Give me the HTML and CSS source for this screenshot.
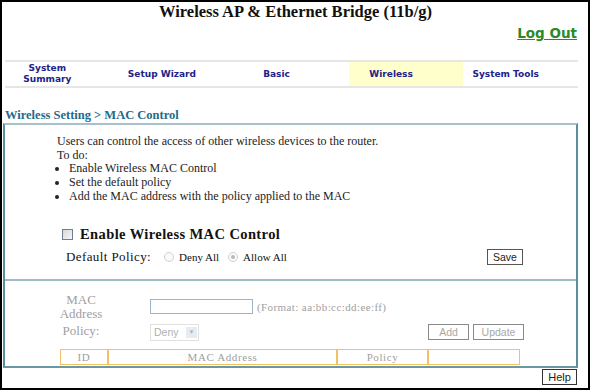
FILE: index.html
```html
<!DOCTYPE html>
<html>
<head>
	<title>MAC Control</title>
	<meta charset="utf-8">
	<link rel="stylesheet" href="styles.css">
</head>
<body>
	<div class="frame">
		<div class="header">
			<h1 class="title">Wireless AP &amp; Ethernet Bridge (11b/g)</h1>
			<div class="logout"><a href="#">Log Out</a></div>
		</div>

		<div class="nav">
			<div class="nav-item">System<br>Summary</div>
			<div class="nav-item">Setup Wizard</div>
			<div class="nav-item">Basic</div>
			<div class="nav-item active">Wireless</div>
			<div class="nav-item">System Tools</div>
		</div>

		<div class="crumb">Wireless Setting &gt; MAC Control</div>

		<div class="panel">
			<div class="intro">
				<p>Users can control the access of other wireless devices to the router.</p>
				<p>To do:</p>
				<ul>
					<li>Enable Wireless MAC Control</li>
					<li>Set the default policy</li>
					<li>Add the MAC address with the policy applied to the MAC</li>
				</ul>
			</div>

			<div class="enable">
				<span class="checkbox"></span>
				<span>Enable Wireless MAC Control</span>
			</div>

			<div class="policy-row">
				<span class="policy-label">Default Policy:</span>
				<span class="radio"></span><span class="opt">Deny All</span>
				<span class="radio checked"></span><span class="opt">Allow All</span>
				<button class="btn save">Save</button>
			</div>

			<div class="divider"></div>

			<div class="mac-form">
				<div class="field-label">MAC<br>Address</div>
				<div class="field">
					<span class="text-input"></span>
					<span class="hint">(Format: aa:bb:cc:dd:ee:ff)</span>
				</div>
				<div class="field-label policy">Policy:</div>
				<div class="field">
					<span class="select">Deny<span class="arrow">&#9660;</span></span>
					<span class="actions">
						<button class="btn off add">Add</button>
						<button class="btn off update">Update</button>
					</span>
				</div>
			</div>

			<table class="mac-table">
				<tr>
					<td class="c-id">ID</td>
					<td class="c-mac">MAC Address</td>
					<td class="c-pol">Policy</td>
					<td class="c-end"></td>
				</tr>
			</table>
		</div>

		<div class="footer">
			<button class="btn help">Help</button>
		</div>
	</div>
</body>
</html>
```

FILE: styles.css
```css
body {
	margin: 0;
	background-color: white;
	font-family: 'Liberation Serif', serif;
}

.frame {
	width: 590px;
	height: 390px;
	box-sizing: border-box;
	border: 2px solid black;
	background-color: white;
	padding: 0 10px 0 1px;
	display: flex;
	flex-direction: column;
}

.header {
	height: 58px;
	flex-shrink: 0;
}

.title {
	margin: 0;
	padding-left: 10px;
	text-align: center;
	font-size: 16.5px;
	line-height: 20px;
	font-weight: bold;
	color: #111;
}

.logout {
	text-align: right;
	padding-top: 2px;
	padding-right: 1px;
}

.logout a {
	font-family: 'DejaVu Sans', sans-serif;
	font-size: 13.5px;
	font-weight: bold;
	color: #2a8a2a;
	text-decoration: underline;
}

.nav {
	display: flex;
	flex-shrink: 0;
	margin-left: 2px;
	border-top: 2px solid #e6e6e6;
	border-bottom: 2px solid #e6e6e6;
	height: 24px;
}

.nav-item {
	flex: 1;
	display: flex;
	align-items: center;
	justify-content: center;
	padding-right: 30px;
	text-align: center;
	font-family: 'DejaVu Sans', sans-serif;
	font-size: 9px;
	font-weight: bold;
	line-height: 11px;
	color: #22228a;
}

.nav-item.active {
	background-color: #ffffcc;
}

.crumb {
	margin-top: 20px;
	padding-left: 2px;
	font-size: 12.5px;
	font-weight: bold;
	line-height: 14px;
	height: 14px;
	color: #246a8c;
}

.panel {
	margin-top: 1px;
	border-top: 2px solid #a8c0cc;
	border-left: 2px solid #5d8e9d;
	border-right: 2px solid #5d8e9d;
	border-bottom: 2px solid #6b97a5;
	padding-bottom: 1px;
}

.intro {
	padding: 10px 0 0 52px;
	font-size: 12px;
	line-height: 13.7px;
	color: #222;
}

.intro p {
	margin: 0;
}

.intro ul {
	margin: 0;
	padding-left: 12px;
	list-style: disc;
}

.enable {
	display: flex;
	align-items: center;
	gap: 7px;
	margin-top: 22px;
	padding-left: 57px;
	font-size: 14.5px;
	line-height: 17px;
	font-weight: bold;
	color: #111;
	letter-spacing: 0.4px;
}

.checkbox {
	width: 9px;
	height: 9px;
	border: 1px solid #6f7f8f;
	background: linear-gradient(135deg, #d8d8d8, #f6f6f6);
}

.policy-row {
	display: flex;
	align-items: center;
	margin-top: 5px;
	padding-left: 61px;
	padding-right: 53px;
	height: 18px;
	font-size: 13px;
	color: #111;
}

.policy-label {
	letter-spacing: 0.4px;
	margin-right: 13px;
}

.radio {
	width: 8px;
	height: 8px;
	border: 1px solid #d0d0d0;
	border-radius: 50%;
	margin-right: 5px;
	position: relative;
	background-color: #fafafa;
}

.radio.checked::after {
	content: '';
	position: absolute;
	left: 2px;
	top: 2px;
	width: 4px;
	height: 4px;
	border-radius: 50%;
	background-color: #b8b8b8;
}

.opt {
	font-size: 11px;
	margin-right: 9px;
}

.btn {
	font-family: 'Liberation Sans', sans-serif;
	font-size: 10.5px;
	background-color: white;
	border: 1px solid #555;
	color: #222;
	padding: 0;
	height: 16px;
	line-height: 14px;
	text-align: center;
}

.save {
	margin-left: auto;
	width: 36px;
}

.divider {
	margin-top: 13px;
	border-top: 2px solid #9cbcc6;
}

.mac-form {
	display: grid;
	grid-template-columns: 102px 1fr;
	padding-left: 25px;
	padding-right: 52px;
	margin-top: 12px;
	color: #a0a0a0;
}

.field-label {
	text-align: center;
	font-size: 13px;
	line-height: 14px;
}

.field-label.policy {
	padding-top: 3px;
}

.field {
	display: flex;
	align-items: center;
	padding-left: 18px;
}

.text-input {
	width: 101px;
	height: 13px;
	border: 1px solid #9db3c6;
	margin-right: 4px;
}

.hint {
	font-size: 11px;
	letter-spacing: 0.4px;
}

.select {
	display: flex;
	align-items: center;
	justify-content: space-between;
	width: 44px;
	height: 15px;
	margin-top: 3px;
	border: 1px solid #e0e0e0;
	padding-left: 3px;
	font-family: 'Liberation Sans', sans-serif;
	font-size: 10.5px;
	color: #b0b0b0;
}

.arrow {
	width: 11px;
	height: 11px;
	margin-right: 1px;
	background-color: #e6ecf2;
	font-size: 6px;
	color: #a8b4c4;
	text-align: center;
	line-height: 11px;
}

.actions {
	margin-left: auto;
	margin-top: 3px;
	display: flex;
	gap: 4px;
}

.btn.off {
	color: #a8a8a8;
	border-color: #8a8a8a;
}

.add { width: 41px; }
.update { width: 51px; }

.mac-table {
	margin: 8px 0 0 55px;
	border-collapse: separate;
	border-spacing: 0;
	width: 460px;
	font-size: 11px;
	color: #a0a0a0;
	letter-spacing: 0.6px;
}

.mac-table td {
	border: 1px solid #f2c262;
	height: 14px;
	padding: 0;
	text-align: center;
}

.c-id { width: 46px; }
.c-mac { width: 227px; }
.c-pol { width: 89px; }

.footer {
	display: flex;
	justify-content: flex-end;
	padding-top: 1px;
	padding-right: 1px;
}

.help {
	width: 35px;
	border: 1px solid #333;
	color: #222;
	font-size: 11px;
}
```
